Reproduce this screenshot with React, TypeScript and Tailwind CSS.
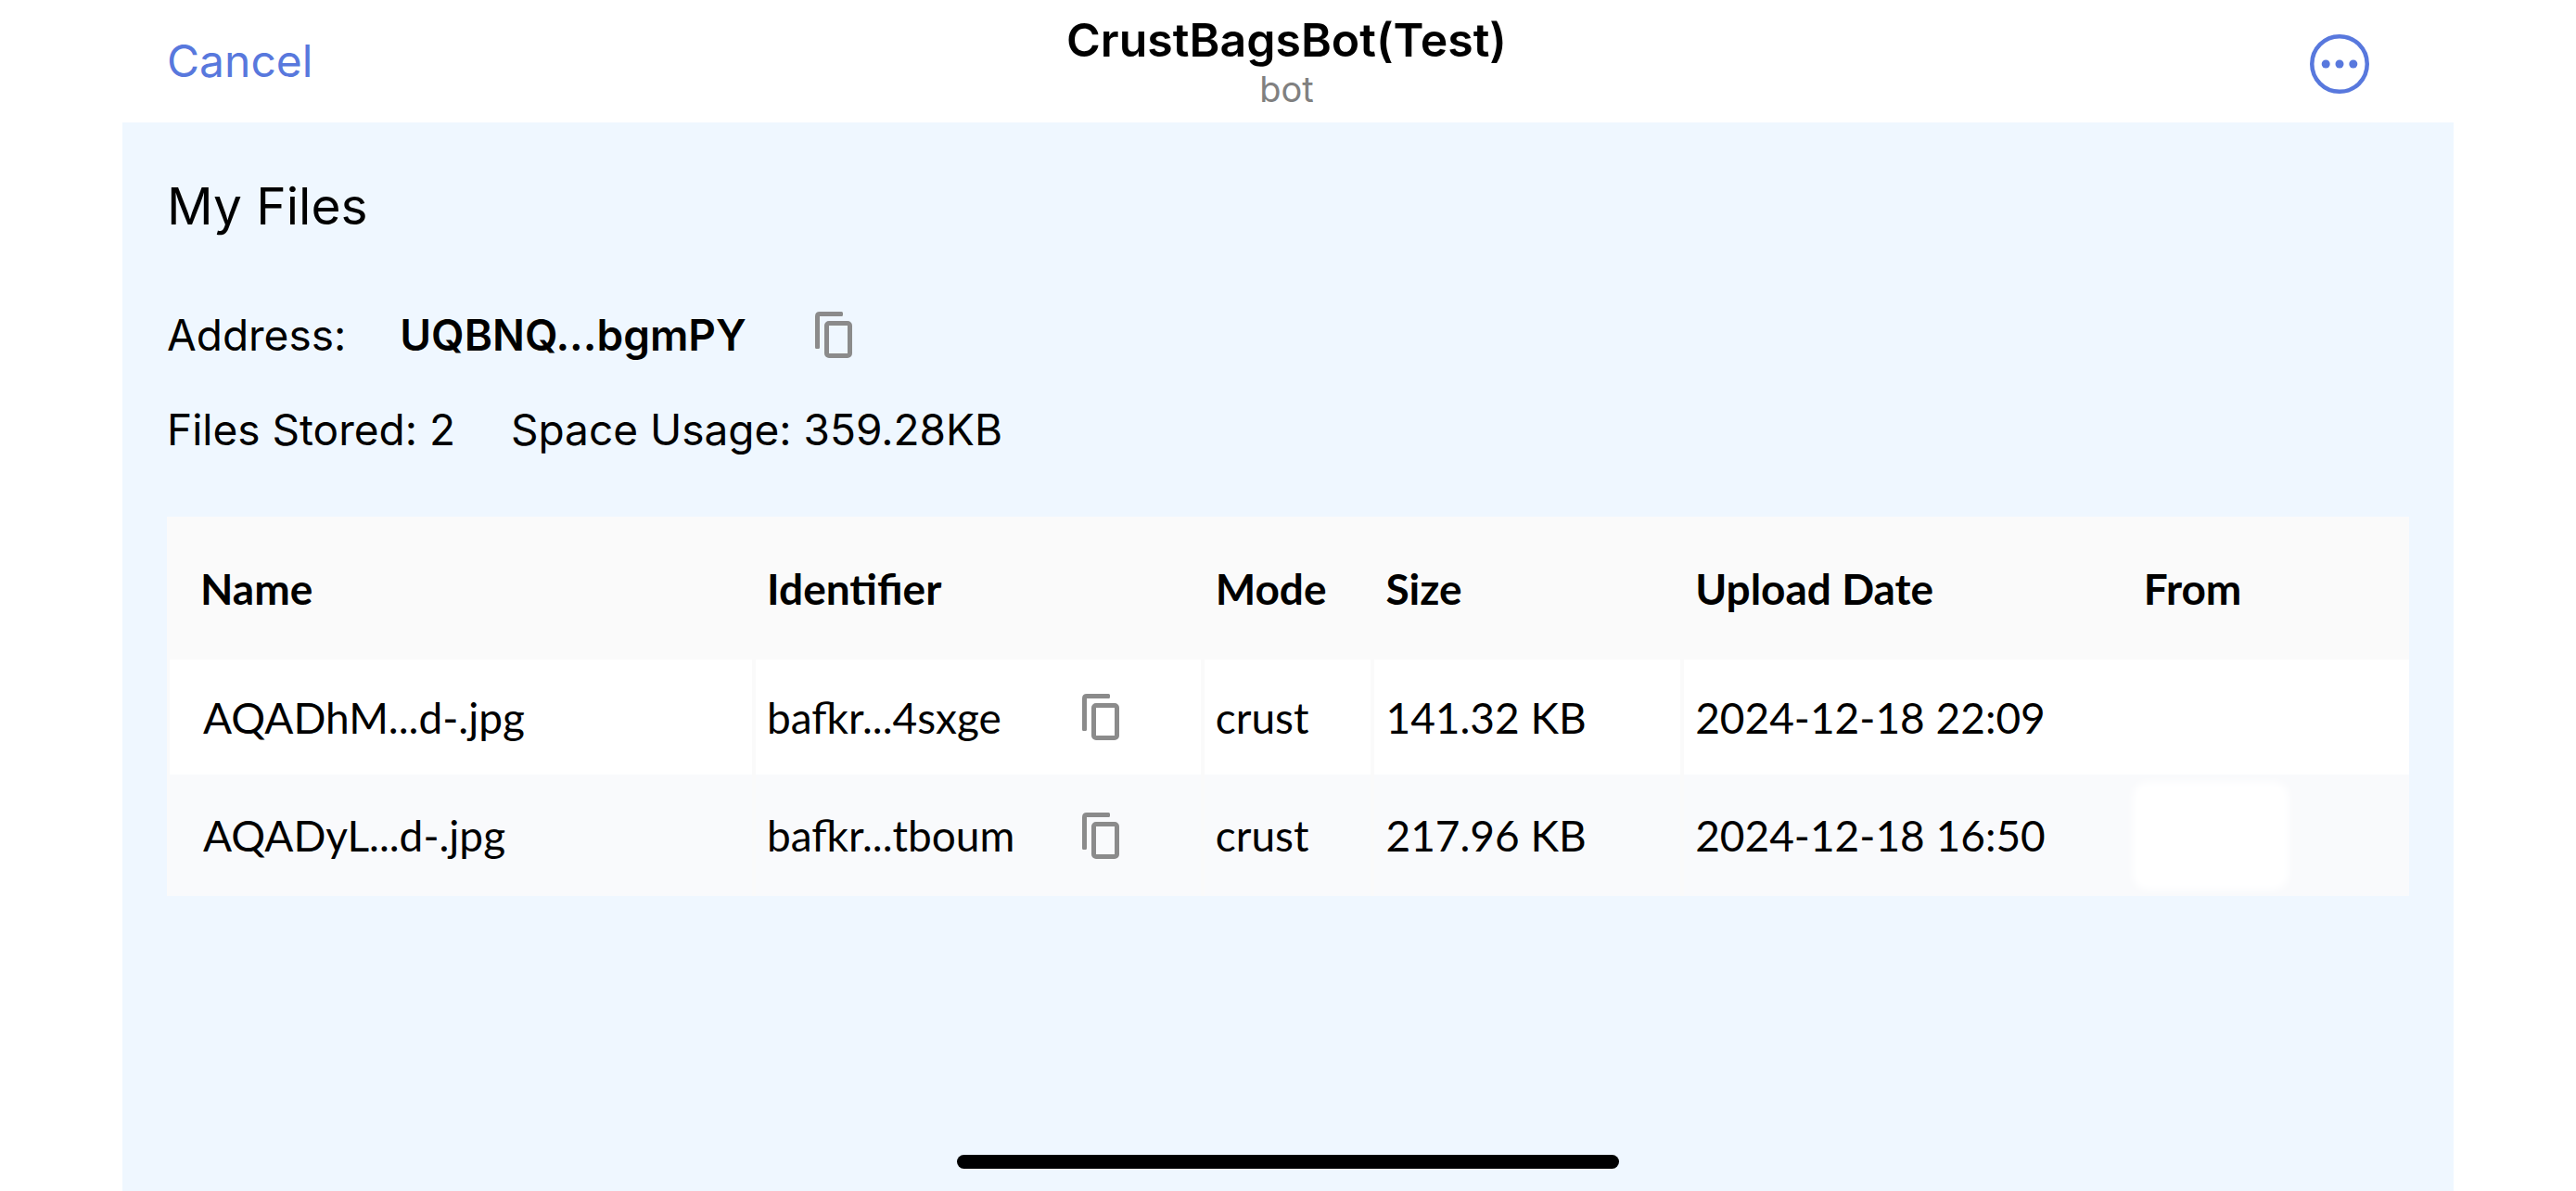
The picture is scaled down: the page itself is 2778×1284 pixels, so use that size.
type StoredFile = {
  name: string;
  identifier: string;
  mode: string;
  size: string;
  date: string;
};

const files: StoredFile[] = [
  {
    name: "AQADhM...d-.jpg",
    identifier: "bafkr...4sxge",
    mode: "crust",
    size: "141.32 KB",
    date: "2024-12-18 22:09",
  },
  {
    name: "AQADyL...d-.jpg",
    identifier: "bafkr...tboum",
    mode: "crust",
    size: "217.96 KB",
    date: "2024-12-18 16:50",
  },
];

export default function App() {
  return (
    <div className="min-h-screen flex flex-col bg-white px-[132px] font-[Inter,sans-serif] text-black">
      <TopBar />
      <main className="flex-1 flex flex-col bg-[#eff7ff] px-12 pt-12 pb-6">
        <Summary />
        <FilesTable />
        <div className="mt-auto self-center w-[714px] h-[15px] rounded-lg bg-black" />
      </main>
    </div>
  );
}

const TopBar = () => {
  return (
    <header className="h-[132px] grid grid-cols-3 items-center pl-12 pr-[91px]">
      <button className="justify-self-start text-5xl leading-[60px] text-[#5878dd]">
        Cancel
      </button>
      <div className="flex flex-col items-center pl-10">
        <h1 className="text-[50px] leading-[60px] font-semibold whitespace-nowrap">
          CrustBagsBot(Test)
        </h1>
        <span className="text-[38px] leading-[46px] text-[#808080]">bot</span>
      </div>
      <button className="justify-self-end pt-1.5" aria-label="More">
        <svg className="size-16" viewBox="0 0 64 64" fill="#5878dd">
          <circle
            cx="32"
            cy="32"
            r="29.75"
            fill="none"
            stroke="#5878dd"
            strokeWidth="4.5"
          />
          <circle cx="17.2" cy="32" r="4.5" />
          <circle cx="32" cy="32" r="4.5" />
          <circle cx="46.8" cy="32" r="4.5" />
        </svg>
      </button>
    </header>
  );
};

const CopyButton = ({ label }: { label: string }) => {
  const handleOnClick = () => console.log("copy", label);
  return (
    <button onClick={handleOnClick} aria-label={`Copy ${label}`}>
      <svg className="w-10 h-[50px]" viewBox="0 0 40 50" fill="#8b8b8b">
        <path d="M5 0H28.5Q30 0 30 1.5V3.5Q30 5 28.5 5H5V38.5Q5 40 3.5 40H1.5Q0 40 0 38.5V5Q0 0 5 0Z" />
        <rect
          x="12.5"
          y="12.5"
          width="25"
          height="35"
          rx="2.5"
          fill="none"
          stroke="#8b8b8b"
          strokeWidth="5"
        />
      </svg>
    </button>
  );
};

const Summary = () => {
  return (
    <section className="flex flex-col">
      <h2 className="text-[55px] leading-[84px]">My Files</h2>
      <div className="mt-[67px] h-[60px] flex items-center text-[46px]">
        <span>Address:</span>
        <span className="ml-[58px] mr-[74px] font-semibold">UQBNQ...bgmPY</span>
        <CopyButton label="address" />
      </div>
      <div className="mt-[42px] h-[60px] flex items-center gap-[60px] text-[46px]">
        <span>Files Stored: 2</span>
        <span>Space Usage: 359.28KB</span>
      </div>
    </section>
  );
};

const FilesTable = () => {
  return (
    <table className="mt-16 w-full table-fixed border-separate border-spacing-0 bg-[#fafafa] text-left text-[46px] font-[Lato,sans-serif]">
      <thead>
        <tr className="h-[154px]">
          <th className="w-[26.1%] pl-9 font-bold">Name</th>
          <th className="w-[20%] pl-4 font-bold">Identifier</th>
          <th className="w-[7.6%] pl-4 font-bold">Mode</th>
          <th className="w-[13.8%] pl-4 font-bold">Size</th>
          <th className="w-[20%] pl-4 font-bold">Upload Date</th>
          <th className="pl-4 font-bold">From</th>
        </tr>
      </thead>
      <tbody>
        {files.map((file: StoredFile, index: number) => (
          <FileRow key={file.name} file={file} striped={index % 2 === 1} />
        ))}
      </tbody>
    </table>
  );
};

const FileRow = ({ file, striped }: { file: StoredFile; striped: boolean }) => {
  return (
    <tr className={striped ? "h-[131px] bg-[#f9fafc]" : "h-[124px] bg-white"}>
      <td className="border-l-3 border-[#fafafa] pl-9">{file.name}</td>
      <td className="border-l-4 border-[#fafafa] pl-3">
        <div className="flex items-center justify-between pr-[88px]">
          <span>{file.identifier}</span>
          <CopyButton label={file.identifier} />
        </div>
      </td>
      <td className="border-l-4 border-[#fafafa] pl-3">{file.mode}</td>
      <td className="border-l-4 border-[#fafafa] pl-3">{file.size}</td>
      <td className="border-l-4 border-[#fafafa] pl-3">{file.date}</td>
      <td className="pl-1">
        {striped && (
          <div className="w-[168px] h-[116px] rounded-2xl bg-white blur-xs" />
        )}
      </td>
    </tr>
  );
};
